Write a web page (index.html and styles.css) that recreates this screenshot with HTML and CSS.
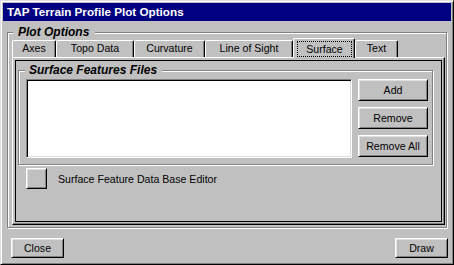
FILE: index.html
```html
<!DOCTYPE html>
<html>
<head>
<meta charset="utf-8">
<link rel="stylesheet" href="styles.css">
</head>
<body>
<div class="window">
  <div class="titlebar">TAP Terrain Profile Plot Options</div>
  <div class="content">
    <div class="group outer-group">
      <span class="legend legend-plot">Plot Options</span>
      <div class="tabs">
        <div class="tab t-axes">Axes</div>
        <div class="tab t-topo">Topo Data</div>
        <div class="tab t-curv">Curvature</div>
        <div class="tab t-los">Line of Sight</div>
        <div class="tab selected t-surface"><span class="focus">Surface</span></div>
        <div class="tab t-text">Text</div>
      </div>
      <div class="panel">
        <div class="sheet">
          <div class="group files-group">
            <span class="legend legend-files">Surface Features Files</span>
            <div class="files-row">
              <div class="listbox"></div>
              <div class="btn-col">
                <button class="btn side-btn">Add</button>
                <button class="btn side-btn">Remove</button>
                <button class="btn side-btn">Remove All</button>
              </div>
            </div>
          </div>
          <div class="editor-row">
            <button class="btn square"></button>
            <span class="editor-label">Surface Feature Data Base Editor</span>
          </div>
        </div>
      </div>
    </div>
    <div class="footer">
      <button class="btn foot-btn">Close</button>
      <button class="btn foot-btn">Draw</button>
    </div>
  </div>
</div>
</body>
</html>
```
FILE: styles.css
```css
* { box-sizing: border-box; }
body {
  margin: 0;
  background: #c0c0c0;
  font-family: "Liberation Sans", Arial, sans-serif;
  font-size: 10.6px;
  color: #000;
}
.window {
  width: 454px;
  height: 265px;
  border: 1px solid;
  border-color: #dfdfdf #000 #000 #dfdfdf;
  box-shadow: inset 1px 1px #fff, inset -1px -1px #808080;
  padding: 2px;
  display: flex;
  flex-direction: column;
}
.titlebar {
  height: 18px;
  background: #000080;
  color: #fff;
  font-weight: bold;
  font-size: 11.7px;
  line-height: 18px;
  padding-left: 4px;
  white-space: nowrap;
}
.content {
  flex: 1;
  padding: 11px 3px 0 4px;
  display: flex;
  flex-direction: column;
}
.group {
  position: relative;
  border: 1px solid #808080;
  box-shadow: inset 1px 1px #fff, 1px 1px #fff;
}
.legend {
  position: absolute;
  top: -8px;
  background: #c0c0c0;
  font-weight: bold;
  font-style: italic;
  font-size: 12px;
  line-height: 14px;
  white-space: nowrap;
}
.legend-plot { left: 5px; padding: 0 6px 0 5px; }
.legend-files { left: 6px; padding: 0 5px 0 4px; }

.outer-group {
  height: 196px;
  margin-right: 1px;
  padding: 5px 1px 2px 4px;
  display: flex;
  flex-direction: column;
}
.tabs {
  display: flex;
  align-items: flex-end;
  height: 19px;
  position: relative;
  z-index: 1;
}
.tab {
  height: 17px;
  border: 1px solid;
  border-bottom: none;
  border-color: #fff #000 transparent #fff;
  border-radius: 2px 2px 0 0;
  box-shadow: inset -1px 0 #808080;
  background: #c0c0c0;
  text-align: center;
  line-height: 15px;
  white-space: nowrap;
}
.t-axes { width: 44px; }
.t-topo { width: 78px; }
.t-curv { width: 71px; }
.t-los { width: 88px; }
.t-surface { width: 62px; }
.t-text { width: 43px; }
.tab.selected {
  height: 20px;
  margin-bottom: -1px;
}
.focus {
  display: block;
  height: 16px;
  margin: 2px 2px 0 3px;
  border: 1px dotted #000;
  line-height: 14px;
}
.panel {
  flex: 1;
  border: 1px solid;
  border-color: #fff #000 #000 #fff;
  box-shadow: inset -1px -1px #808080;
  padding: 2px;
  display: flex;
}
.sheet {
  flex: 1;
  border: 1px solid #000;
  padding: 9px 7px 0 2px;
}
.files-group {
  margin-right: 1px;
  padding: 8px 4px 6px 7px;
}
.files-row {
  display: flex;
  gap: 6px;
}
.listbox {
  flex: 1;
  height: 79px;
  background: #fff;
  border: 1px solid;
  border-color: #808080 #fff #fff #808080;
  box-shadow: inset 1px 1px #000, inset -1px -1px #dfdfdf;
}
.btn-col {
  width: 70px;
  display: flex;
  flex-direction: column;
  gap: 6px;
}
.btn {
  font: inherit;
  color: #000;
  background: #c0c0c0;
  border: 1px solid;
  border-color: #fff #000 #000 #fff;
  box-shadow: inset 1px 1px #dfdfdf, inset -1px -1px #808080;
  padding: 0;
  margin: 0;
}
.side-btn { height: 22px; width: 70px; }
.editor-row {
  display: flex;
  align-items: center;
  gap: 11px;
  margin: 3px 0 0 8px;
}
.square { width: 21px; height: 21px; }
.footer {
  display: flex;
  justify-content: space-between;
  margin-top: 10px;
  padding-left: 4px;
}
.foot-btn { width: 53px; height: 20px; }
```
